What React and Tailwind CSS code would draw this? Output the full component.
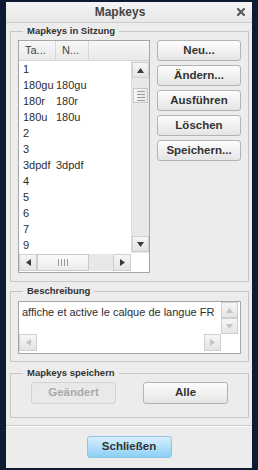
import React from "react";

const rows = [
  ["1", ""],
  ["180gu", "180gu"],
  ["180r", "180r"],
  ["180u", "180u"],
  ["2", ""],
  ["3", ""],
  ["3dpdf", "3dpdf"],
  ["4", ""],
  ["5", ""],
  ["6", ""],
  ["7", ""],
  ["9", ""],
];

const Arrow = ({ dir, muted }) => {
  const pts = {
    up: "0,5 3.5,0 7,5",
    down: "0,0 3.5,5 7,0",
    left: "5,0 0,3.5 5,7",
    right: "0,0 5,3.5 0,7",
  }[dir];
  const vertical = dir === "up" || dir === "down";
  return (
    <svg width={vertical ? 7 : 5} height={vertical ? 5 : 7} viewBox={vertical ? "0 0 7 5" : "0 0 5 7"}>
      <polygon points={pts} fill={muted ? "#c4c4c4" : "#3a3a3a"} />
    </svg>
  );
};

const ScrollBtn = ({ dir, muted, className = "" }) => (
  <div
    className={`flex items-center justify-center border border-[#cfcfcf] bg-gradient-to-b from-[#f6f6f6] to-[#e4e4e4] ${className}`}
  >
    <Arrow dir={dir} muted={muted} />
  </div>
);

const Button = ({ children, disabled, className = "" }) => (
  <button
    className={`h-[21px] w-[84px] rounded-[3px] border text-[11.5px] font-bold leading-none ${
      disabled
        ? "border-[#d2d2d2] bg-[#e9e9e9] text-[#a9a9a9]"
        : "border-[#b3b3b3] bg-gradient-to-b from-[#fdfdfd] to-[#e5e5e5] text-[#333]"
    } ${className}`}
  >
    {children}
  </button>
);

const Group = ({ title, className = "", children }) => (
  <fieldset className={`ml-[4px] mr-[3px] border border-[#c6c6c6] ${className}`}>
    <legend className="ml-[12px] px-[4px] text-[9.5px] font-bold leading-[12px] text-[#333]">{title}</legend>
    {children}
  </fieldset>
);

const MapkeysTable = () => (
  <div className="flex h-[233px] w-[132px] flex-col border border-[#a6a6a6] bg-white">
    <div className="flex h-[20px] border-b border-[#d4d4d4] bg-gradient-to-b from-[#f7f7f7] to-[#e9e9e9] text-[11px] text-[#444]">
      <div className="flex w-[37px] items-center border-r border-[#d6d6d6] pl-[6px]">Ta...</div>
      <div className="flex w-[33px] items-center border-r border-[#d6d6d6] pl-[6px]">N...</div>
      <div className="flex-1" />
    </div>
    <div className="flex h-[192px]">
      <div className="flex w-[112px] flex-col text-[11px] text-[#2e2e2e]">
        {rows.map(([key, name], i) => (
          <div key={i} className="flex h-[16px] items-center">
            <span className="w-[37px] pl-[4px]">{key}</span>
            <span>{name}</span>
          </div>
        ))}
      </div>
      <div className="flex w-[18px] flex-col border-l border-[#dcdcdc] bg-[#e8e8e8] pt-[1px]">
        <ScrollBtn dir="up" className="h-[16px]" />
        <div className="mx-[1px] mt-[10px] flex h-[15px] flex-col items-center justify-center gap-[2px] border border-[#c9c9c9] bg-gradient-to-r from-[#f8f8f8] to-[#e8e8e8]">
          <div className="h-px w-[8px] bg-[#9a9a9a]" />
          <div className="h-px w-[8px] bg-[#9a9a9a]" />
          <div className="h-px w-[8px] bg-[#9a9a9a]" />
          <div className="h-px w-[8px] bg-[#9a9a9a]" />
        </div>
        <div className="flex-1" />
        <ScrollBtn dir="down" className="mb-[1px] h-[16px]" />
      </div>
    </div>
    <div className="h-[19px] pt-[1px]">
      <div className="flex h-[17px] w-[112px] bg-[#e8e8e8]">
        <ScrollBtn dir="left" className="w-[18px]" />
        <div className="flex w-[52px] items-center justify-center gap-[2px] border border-[#c9c9c9] bg-gradient-to-b from-[#fafafa] to-[#ececec]">
          <div className="h-[7px] w-px bg-[#9a9a9a]" />
          <div className="h-[7px] w-px bg-[#9a9a9a]" />
          <div className="h-[7px] w-px bg-[#9a9a9a]" />
          <div className="h-[7px] w-px bg-[#9a9a9a]" />
        </div>
        <div className="flex-1" />
        <ScrollBtn dir="right" className="w-[18px]" />
      </div>
    </div>
  </div>
);

const App = () => {
  return (
    <div className="flex h-[470px] w-[258px] flex-col bg-[#0e1c33] px-[6px] pb-[2px] pt-[2px] font-['Liberation_Sans',Arial,sans-serif]">
      <div className="flex flex-1 flex-col bg-[#ececec]">
        <div className="flex h-[21px] items-center border-b border-[#cdcdcd] bg-gradient-to-b from-[#f5f5f5] to-[#e7e7e7]">
          <span className="flex-1 text-center text-[12px] font-bold text-[#444]">Mapkeys</span>
          <span className="flex w-[18px] items-center pl-[3px]">
            <svg width="8" height="8" viewBox="0 0 8 8">
              <path d="M1 1 L7 7 M7 1 L1 7" stroke="#5a5a5a" strokeWidth="2.2" strokeLinecap="square" />
            </svg>
          </span>
        </div>

        <Group title="Mapkeys in Sitzung" className="mt-[2px] pb-[8px] pt-[3px]">
          <div className="flex gap-[7px] pl-[7px]">
            <MapkeysTable />
            <div className="flex flex-col gap-[4px]">
              <Button>Neu...</Button>
              <Button>Ändern...</Button>
              <Button>Ausführen</Button>
              <Button>Löschen</Button>
              <Button>Speichern...</Button>
            </div>
          </div>
        </Group>

        <Group title="Beschreibung" className="mt-[3px] pb-[7px] pt-[4px]">
          <div className="ml-[7px] flex h-[53px] w-[223px] flex-col border border-[#a6a6a6] bg-white">
            <div className="flex h-[32px]">
              <div className="flex-1 pl-[3px] pt-[3px] text-[11px] leading-[14px] text-[#2e2e2e]">
                affiche et active le calque de langue FR
              </div>
              <div className="mr-[2px] flex w-[17px] flex-col">
                <ScrollBtn dir="up" muted className="h-[16px]" />
                <ScrollBtn dir="down" muted className="h-[16px]" />
              </div>
            </div>
            <div className="flex h-[17px] w-[202px]">
              <ScrollBtn dir="left" muted className="w-[18px]" />
              <div className="flex-1" />
              <ScrollBtn dir="right" muted className="w-[17px]" />
            </div>
          </div>
        </Group>

        <Group title="Mapkeys speichern" className="mt-[5px] pb-[13px] pt-[3px]">
          <div className="flex justify-center gap-[27px]">
            <Button disabled className="h-[22px] w-[85px]">Geändert</Button>
            <Button className="h-[22px] w-[85px]">Alle</Button>
          </div>
        </Group>

        <div className="mt-[7px] border-t border-[#cbcbcb] shadow-[0_1px_0_#fafafa]" />

        <div className="flex justify-center pt-[10px]">
          <button className="h-[22px] w-[85px] rounded-[3px] border border-[#92c3e3] bg-gradient-to-b from-[#d6effd] to-[#8ccff6] text-[11.5px] font-bold text-[#333]">
            Schließen
          </button>
        </div>
      </div>
    </div>
  );
};

export default App;
